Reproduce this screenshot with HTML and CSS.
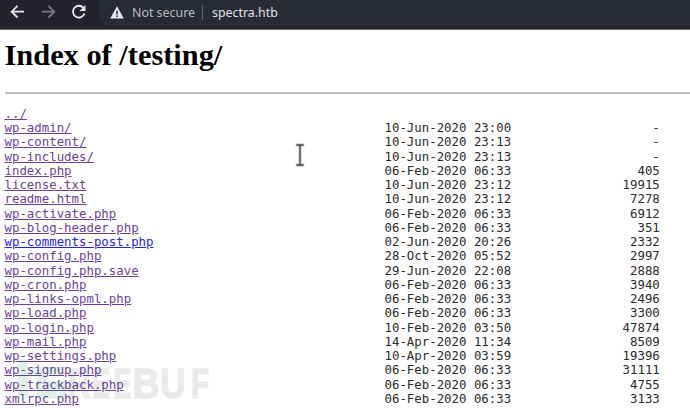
FILE: index.html
```
<!DOCTYPE html>
<html lang="en">
<head>
<meta charset="utf-8">
<title>Index of /testing/</title>
<link rel="stylesheet" href="styles.css">
</head>
<body>
<header class="toolbar">
  <svg class="nav" viewBox="0 0 96 29" aria-hidden="true">
    <path class="back" d="M24 11.7H12M17.5 5.9 11.7 11.7l5.8 5.8"/>
    <path class="forward" d="M42 11.7h12M48.5 5.9 54.3 11.7l-5.8 5.8"/>
    <path class="reload" d="M83.3 7.7A5.9 5.9 0 1 0 84.5 13.5"/>
    <path class="tip" d="M85.5 5v6h-6z"/>
  </svg>
  <div class="address">
    <svg class="warning" viewBox="0 0 14 13" aria-hidden="true"><path class="triangle" d="M7 .3 13.8 12.5H.2z"/><path class="mark" d="M7 4.7v3.8M7 9.4v1.6"/></svg>
    <span class="status">Not secure</span>
    <span class="host">spectra.htb</span>
  </div>
</header>
<main class="page">
  <h1>Index of /testing/</h1>
  <hr>
  <ul class="listing" id="listing"></ul>
</main>
<svg class="watermark" viewBox="0 0 210 50" aria-hidden="true">
  <path class="leaf" d="M8 5h10v8h34v8H36v6h20v18H27V22h-9v23H8z"/>
  <g class="word">
    <text x="57" y="44" textLength="24" lengthAdjust="spacingAndGlyphs">R</text>
    <text x="82" y="44" textLength="18" lengthAdjust="spacingAndGlyphs">E</text>
    <text x="103.5" y="44" textLength="18" lengthAdjust="spacingAndGlyphs">E</text>
    <text x="122.5" y="44" textLength="27" lengthAdjust="spacingAndGlyphs">B</text>
    <text x="150" y="44" textLength="25.5" lengthAdjust="spacingAndGlyphs">U</text>
    <text x="181" y="44" textLength="18" lengthAdjust="spacingAndGlyphs">F</text>
  </g>
</svg>
<svg class="cursor" viewBox="0 0 12 24" aria-hidden="true"><path class="halo" d="M1.7 2h8.6M6 2v20M1.7 22h8.6"/><path class="beam" d="M2.5 2h7M6 2v20M2.5 22h7"/></svg>
<script src="listing.js"></script>
</body>
</html>
```
FILE: styles.css
```
body { margin: 0; background: #fff; height: 408px; overflow: hidden; position: relative; }
.toolbar { display: flex; height: 30px; background: #22232c; border-bottom: 1px solid #6d6d74; box-sizing: border-box; }
.nav { width: 96px; height: 29px; fill: none; stroke: #e8e8ea; stroke-width: 1.8; }
.forward { stroke: #777981; }
.tip { fill: #e8e8ea; stroke: none; }
.address { flex: 1; height: 26px; margin-left: 3px; padding: 0 0 2px 11px; box-sizing: border-box; display: flex; align-items: center; background: #282a35; border-radius: 0 0 0 13px; font: 12.4px "Noto Sans", sans-serif; color: #e0e0e3; }
.warning { width: 14px; height: 13px; }
.triangle { fill: #e8e8ea; }
.mark { stroke: #282a35; stroke-width: 1.5; }
.status { margin-left: 8px; padding-right: 7px; border-right: 1px solid #62646e; line-height: 15px; color: #b9bac0; }
.host { margin-left: 9px; line-height: 15px; }
.page { padding-left: 4.5px; }
h1 { margin: 6px 0 0; font: bold 30.4px/38px "Liberation Serif", serif; color: #000; }
hr { margin: 18px 0 0; border: 0; height: 2px; background: #c3c3c3; }
.listing { list-style: none; margin: 12.8px 0 0; padding: 0; font: 12.39px/14.25px "DejaVu Sans Mono", monospace; color: #2b2b2b; }
.row { display: grid; grid-template-columns: 380px 127px 148.3px; height: 14.25px; white-space: pre; }
.size { text-align: right; }
a { justify-self: start; color: #6c3fa0; text-decoration: underline; }
.unvisited { color: #2424f4; }
.watermark { position: absolute; left: 10px; top: 354px; width: 210px; height: 50px; }
.leaf { fill: #0a8a48; opacity: .12; }
.word { font: bold 43px "Liberation Sans", sans-serif; fill: #000; stroke: #000; stroke-width: 1.6; opacity: .08; }
.cursor { position: absolute; left: 294px; top: 143px; width: 12px; height: 24px; fill: none; }
.halo { stroke: #cecece; stroke-width: 3.5; }
.beam { stroke: #444; stroke-width: 1.3; }
```
FILE: listing.js
```
const entries = [
  ["../", "", ""],
  ["wp-admin/", "10-Jun-2020 23:00", "-"],
  ["wp-content/", "10-Jun-2020 23:13", "-"],
  ["wp-includes/", "10-Jun-2020 23:13", "-"],
  ["index.php", "06-Feb-2020 06:33", "405"],
  ["license.txt", "10-Jun-2020 23:12", "19915"],
  ["readme.html", "10-Jun-2020 23:12", "7278"],
  ["wp-activate.php", "06-Feb-2020 06:33", "6912"],
  ["wp-blog-header.php", "06-Feb-2020 06:33", "351"],
  ["wp-comments-post.php", "02-Jun-2020 20:26", "2332"],
  ["wp-config.php", "28-Oct-2020 05:52", "2997"],
  ["wp-config.php.save", "29-Jun-2020 22:08", "2888"],
  ["wp-cron.php", "06-Feb-2020 06:33", "3940"],
  ["wp-links-opml.php", "06-Feb-2020 06:33", "2496"],
  ["wp-load.php", "06-Feb-2020 06:33", "3300"],
  ["wp-login.php", "10-Feb-2020 03:50", "47874"],
  ["wp-mail.php", "14-Apr-2020 11:34", "8509"],
  ["wp-settings.php", "10-Apr-2020 03:59", "19396"],
  ["wp-signup.php", "06-Feb-2020 06:33", "31111"],
  ["wp-trackback.php", "06-Feb-2020 06:33", "4755"],
  ["xmlrpc.php", "06-Feb-2020 06:33", "3133"]
];
document.getElementById("listing").innerHTML = entries.map(([name, date, size]) =>
  `<li class="row"><a href="#"${name === "wp-comments-post.php" ? ' class="unvisited"' : ""}>${name}</a><span>${date}</span><span class="size">${size}</span></li>`
).join("");
```
